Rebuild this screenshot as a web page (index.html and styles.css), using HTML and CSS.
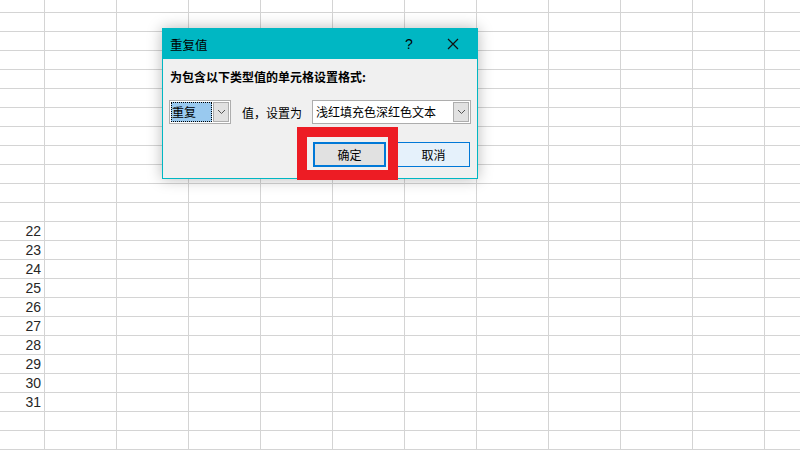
FILE: index.html
```
<!DOCTYPE html>
<html lang="zh-CN">
<head>
    <meta charset="UTF-8">
    <title>重复值</title>
    <link rel="stylesheet" href="styles.css">
</head>
<body>
    <div class="sheet" id="sheet">
        <!-- rows are built below -->
    </div>

    <div class="dialog">
        <div class="titlebar">
            <span class="title">重复值</span>
            <span class="help">?</span>
            <span class="close">
                <svg width="12" height="12" viewBox="0 0 12 12"><path d="M1 1L11 11M11 1L1 11" stroke="#111" stroke-width="1.2" fill="none"/></svg>
            </span>
        </div>
        <div class="dlg-body">
            <div class="prompt">为包含以下类型值的单元格设置格式:</div>
            <div class="rule-row">
                <div class="combo combo-small">
                    <span class="combo-val selected">重复</span>
                    <span class="combo-btn">
                        <svg width="9" height="6" viewBox="0 0 9 6"><path d="M1 1L4.5 4.5L8 1" stroke="#555" stroke-width="1" fill="none"/></svg>
                    </span>
                </div>
                <span class="mid-text">值，设置为</span>
                <div class="combo combo-wide">
                    <span class="combo-val">浅红填充色深红色文本</span>
                    <span class="combo-btn">
                        <svg width="9" height="6" viewBox="0 0 9 6"><path d="M1 1L4.5 4.5L8 1" stroke="#555" stroke-width="1" fill="none"/></svg>
                    </span>
                </div>
            </div>
            <div class="buttons">
                <button class="btn btn-default">确定</button>
                <button class="btn btn-cancel">取消</button>
            </div>
        </div>
    </div>

    <div class="highlight"></div>

    <script>
        // build the worksheet grid (rows 11..33, only 22-31 show numbers)
        const sheet = document.getElementById('sheet');
        function addRow(label, cls) {
            const row = document.createElement('div');
            row.className = 'row' + (cls ? ' ' + cls : '');
            let html = '<div class="rh">' + label + '</div>';
            for (let i = 0; i < 11; i++) html += '<div class="cell"></div>';
            row.innerHTML = html;
            sheet.appendChild(row);
        }
        addRow('', 'row-top');
        for (let n = 11; n <= 33; n++) {
            addRow(n >= 22 && n <= 31 ? n : '');
        }
    </script>
</body>
</html>
```

FILE: styles.css
```
body {
    margin: 0;
    padding: 0;
    background-color: white;
    font-family: "Liberation Sans", Arial, sans-serif;
    width: 800px;
    height: 450px;
    overflow: hidden;
    position: relative;
}
.sheet {
    display: flex;
    flex-direction: column;
}
.row {
    display: flex;
    height: 19px;
    box-sizing: border-box;
    border-bottom: 1px solid #d4d4d4;
    flex-shrink: 0;
}
.row-top {
    height: 13px;
}
.rh {
    width: 45px;
    flex-shrink: 0;
    box-sizing: border-box;
    border-right: 1px solid #d4d4d4;
    text-align: right;
    padding-right: 3px;
    font-size: 14px;
    line-height: 19px;
    color: #262626;
}
.cell {
    width: 72px;
    flex-shrink: 0;
    box-sizing: border-box;
    border-right: 1px solid #d4d4d4;
}

/* dialog */
.dialog {
    position: absolute;
    left: 162px;
    top: 28px;
    width: 316px;
    height: 151px;
    box-sizing: border-box;
    border: 1px solid #00b7c3;
    background-color: #f0f0f0;
    box-shadow: 0 0 14px rgba(0, 0, 0, 0.28);
    font-family: "Noto Sans CJK SC", "Liberation Sans", sans-serif;
    font-size: 12px;
    color: #000;
    display: flex;
    flex-direction: column;
}
.titlebar {
    height: 30px;
    background-color: #00b7c3;
    display: flex;
    align-items: center;
    padding-left: 7px;
    flex-shrink: 0;
}
.title {
    flex: 1;
    font-size: 12.5px;
}
.help {
    font-family: "Liberation Sans", sans-serif;
    font-size: 14px;
    width: 12px;
    margin-right: 30px;
}
.close {
    display: flex;
    width: 12px;
    margin-right: 18px;
}
.dlg-body {
    padding: 10px 7px 0 6px;
    display: flex;
    flex-direction: column;
}
.prompt {
    font-weight: bold;
    line-height: 16px;
    margin-left: 1px;
}
.rule-row {
    display: flex;
    align-items: center;
    margin-top: 15px;
    height: 24px;
}
.combo {
    display: flex;
    flex-shrink: 0;
    height: 24px;
    box-sizing: border-box;
    border: 1px solid #adadad;
    background-color: white;
    padding: 1px;
    gap: 1px;
}
.combo-small {
    width: 62px;
}
.combo-wide {
    width: 159px;
    margin-left: 10px;
}
.combo-val {
    flex: 1;
    line-height: 20px;
    padding-left: 2px;
    white-space: nowrap;
    overflow: hidden;
}
.combo-val.selected {
    background-color: #99c9ef;
    outline: 1px dotted #000;
    outline-offset: -1px;
    padding-left: 1px;
}
.combo-btn {
    width: 16px;
    box-sizing: border-box;
    border: 1px solid #adadad;
    background-color: #e1e1e1;
    display: flex;
    align-items: center;
    justify-content: center;
}
.mid-text {
    margin-left: 11px;
    white-space: nowrap;
    flex-shrink: 0;
}
.buttons {
    display: flex;
    justify-content: flex-end;
    gap: 11px;
    margin-top: 18px;
}
.btn {
    width: 73px;
    height: 25px;
    box-sizing: border-box;
    font-family: "Noto Sans CJK SC", sans-serif;
    font-size: 12px;
    color: #000;
    padding: 0;
}
.btn-default {
    background-color: #e1e1e1;
    border: 2px solid #0078d7;
}
.btn-cancel {
    background-color: #e5f1fb;
    border: 1px solid #0078d7;
}

/* red annotation box */
.highlight {
    position: absolute;
    left: 297px;
    top: 127px;
    width: 101px;
    height: 53px;
    box-sizing: border-box;
    border: 10px solid #ed1c24;
}
```
